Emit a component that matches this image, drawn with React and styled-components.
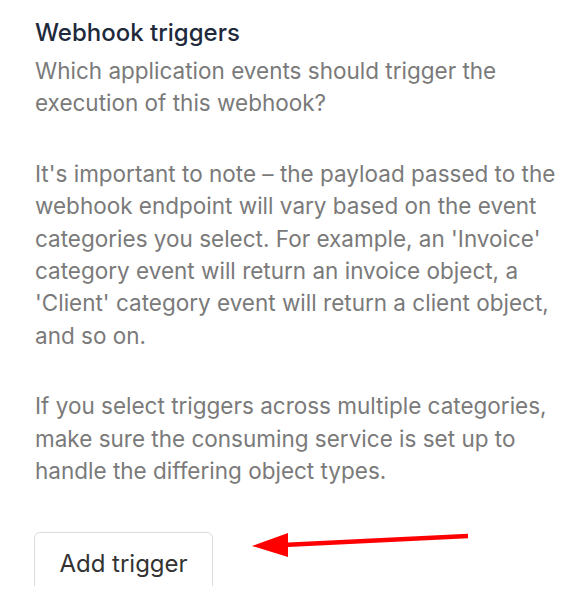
import React from 'react';
import styled, { createGlobalStyle } from 'styled-components';

const GlobalStyle = createGlobalStyle`
  html, body {
    margin: 0;
    padding: 0;
    background: #fff;
  }
  body {
    font-family: Inter, "Noto Sans", sans-serif;
    -webkit-font-smoothing: antialiased;
  }
`;

const Page = styled.div`
  position: relative;
  height: 586px;
  overflow: hidden;
  padding: 17px 20px 0 35px;
  box-sizing: border-box;
`;

const Title = styled.h3`
  margin: 0 0 6px;
  font-size: 24px;
  line-height: 32px;
  font-weight: 500;
  color: #1e2a3b;
`;

const Body = styled.div`
  display: flex;
  flex-direction: column;
  gap: 38px;
  margin-bottom: 45px;
`;

const Text = styled.p`
  margin: 0;
  font-size: 22.5px;
  line-height: 32.4px;
  color: #7a7a7a;
  max-width: 530px;
`;

const Button = styled.button`
  width: 179px;
  height: 62px;
  margin-left: -1px;
  border: 1px solid #dcdcdc;
  border-radius: 6px;
  background: #fff;
  font-family: inherit;
  font-size: 24px;
  color: #333;
  padding: 0;
`;

const Arrow = styled.svg`
  position: absolute;
  left: 245px;
  top: 525px;
`;

const App = () => {
  return (
    <>
      <GlobalStyle />
      <Page>
        <Title>Webhook triggers</Title>
        <Body>
          <Text>Which application events should trigger the execution of this webhook?</Text>
          <Text>
            It's important to note – the payload passed to the webhook endpoint will vary based on
            the event categories you select. For example, an 'Invoice' category event will return an
            invoice object, a 'Client' category event will return a client object, and so on.
          </Text>
          <Text>
            If you select triggers across multiple categories, make sure the consuming service is set
            up to handle the differing object types.
          </Text>
        </Body>
        <Button>Add trigger</Button>
        <Arrow width="230" height="40" viewBox="0 0 230 40">
          <line x1="223" y1="11" x2="38" y2="20" stroke="#ff0000" strokeWidth="4.5" />
          <polygon points="7,21 43,8 43,32" fill="#ff0000" />
        </Arrow>
      </Page>
    </>
  );
};

export default App;
